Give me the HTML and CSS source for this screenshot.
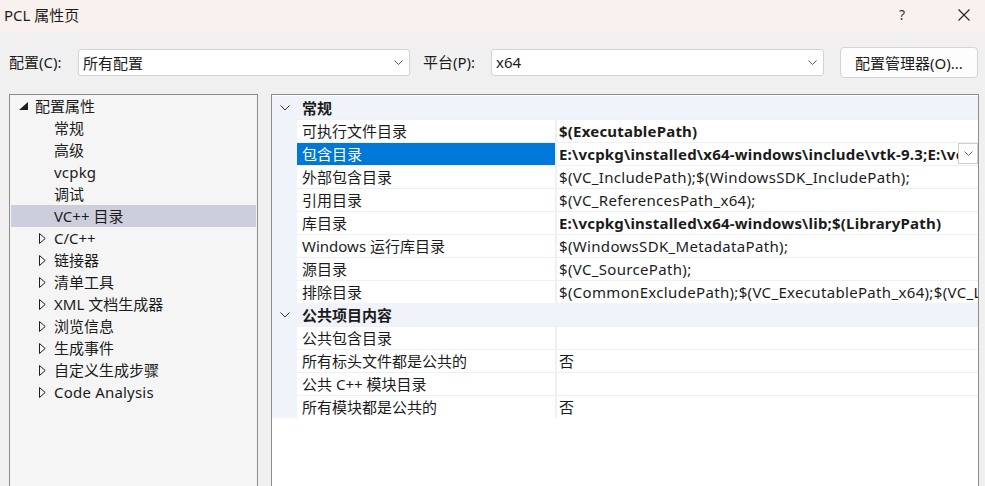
FILE: index.html
```html
<!DOCTYPE html>
<html lang="zh-CN">
<head>
    <meta charset="UTF-8">
    <title>PCL 属性页</title>
    <link rel="stylesheet" href="styles.css">
</head>
<body>
    <div class="window">
        <!-- Title bar -->
        <div class="titlebar">
            <span class="title">PCL 属性页</span>
            <div class="caption-buttons">
                <span class="help">?</span>
                <span class="close">
                    <svg width="12" height="12" viewBox="0 0 12 12"><path d="M0.5 0.5 L11.5 11.5 M11.5 0.5 L0.5 11.5" stroke="#222" stroke-width="1.1" fill="none"/></svg>
                </span>
            </div>
        </div>

        <!-- Configuration / platform bar -->
        <div class="toolbar">
            <label class="field-label config-label">配置(C):</label>
            <div class="combo config-combo">
                <span>所有配置</span>
                <svg class="chevron" width="9" height="5" viewBox="0 0 9 5"><path d="M0.5 0.5 L4.5 4.5 L8.5 0.5" stroke="#555" fill="none"/></svg>
            </div>
            <label class="field-label platform-label">平台(P):</label>
            <div class="combo platform-combo">
                <span>x64</span>
                <svg class="chevron" width="9" height="5" viewBox="0 0 9 5"><path d="M0.5 0.5 L4.5 4.5 L8.5 0.5" stroke="#555" fill="none"/></svg>
            </div>
            <button class="manager-btn">配置管理器(O)...</button>
        </div>

        <div class="content">
            <!-- Left tree -->
            <div class="tree">
                <div class="node level0">
                    <span class="twisty"><svg width="9" height="8" viewBox="0 0 9 8"><path d="M9 0 L9 8 L0 8 Z" fill="#1e1e1e"/></svg></span>
                    <span>配置属性</span>
                </div>
                <div class="node level1"><span class="twisty"></span><span>常规</span></div>
                <div class="node level1"><span class="twisty"></span><span>高级</span></div>
                <div class="node level1"><span class="twisty"></span><span class="latin">vcpkg</span></div>
                <div class="node level1"><span class="twisty"></span><span>调试</span></div>
                <div class="node level1 selected"><span class="twisty"></span><span>VC++ 目录</span></div>
                <div class="node level1"><span class="twisty"><svg class="closed" width="7" height="11" viewBox="0 0 7 11"><path d="M0.5 0.5 L6.2 5.5 L0.5 10.5 Z" fill="none" stroke="#1e1e1e"/></svg></span><span>C/C++</span></div>
                <div class="node level1"><span class="twisty"><svg class="closed" width="7" height="11" viewBox="0 0 7 11"><path d="M0.5 0.5 L6.2 5.5 L0.5 10.5 Z" fill="none" stroke="#1e1e1e"/></svg></span><span>链接器</span></div>
                <div class="node level1"><span class="twisty"><svg class="closed" width="7" height="11" viewBox="0 0 7 11"><path d="M0.5 0.5 L6.2 5.5 L0.5 10.5 Z" fill="none" stroke="#1e1e1e"/></svg></span><span>清单工具</span></div>
                <div class="node level1"><span class="twisty"><svg class="closed" width="7" height="11" viewBox="0 0 7 11"><path d="M0.5 0.5 L6.2 5.5 L0.5 10.5 Z" fill="none" stroke="#1e1e1e"/></svg></span><span>XML 文档生成器</span></div>
                <div class="node level1"><span class="twisty"><svg class="closed" width="7" height="11" viewBox="0 0 7 11"><path d="M0.5 0.5 L6.2 5.5 L0.5 10.5 Z" fill="none" stroke="#1e1e1e"/></svg></span><span>浏览信息</span></div>
                <div class="node level1"><span class="twisty"><svg class="closed" width="7" height="11" viewBox="0 0 7 11"><path d="M0.5 0.5 L6.2 5.5 L0.5 10.5 Z" fill="none" stroke="#1e1e1e"/></svg></span><span>生成事件</span></div>
                <div class="node level1"><span class="twisty"><svg class="closed" width="7" height="11" viewBox="0 0 7 11"><path d="M0.5 0.5 L6.2 5.5 L0.5 10.5 Z" fill="none" stroke="#1e1e1e"/></svg></span><span>自定义生成步骤</span></div>
                <div class="node level1"><span class="twisty"><svg class="closed" width="7" height="11" viewBox="0 0 7 11"><path d="M0.5 0.5 L6.2 5.5 L0.5 10.5 Z" fill="none" stroke="#1e1e1e"/></svg></span><span class="latin">Code Analysis</span></div>
            </div>

            <!-- Property grid -->
            <div class="grid">
                <div class="row category">
                    <span class="gutter"><svg width="10" height="6" viewBox="0 0 10 6"><path d="M0.5 0.5 L5 5 L9.5 0.5" stroke="#333" fill="none"/></svg></span>
                    <span class="cat-name">常规</span>
                </div>
                <div class="row">
                    <span class="gutter"></span>
                    <span class="name">可执行文件目录</span>
                    <span class="value bold">$(ExecutablePath)</span>
                </div>
                <div class="row active">
                    <span class="gutter"></span>
                    <span class="name">包含目录</span>
                    <span class="value bold">
                        <span class="value-text">E:\vcpkg\installed\x64-windows\include\vtk-9.3;E:\vcpkg\installed\x64-windows\include;$(IncludePath)</span>
                        <span class="drop-btn"><svg width="9" height="5" viewBox="0 0 9 5"><path d="M0.5 0.5 L4.5 4.5 L8.5 0.5" stroke="#666" fill="none"/></svg></span>
                    </span>
                </div>
                <div class="row">
                    <span class="gutter"></span>
                    <span class="name">外部包含目录</span>
                    <span class="value">$(VC_IncludePath);$(WindowsSDK_IncludePath);</span>
                </div>
                <div class="row">
                    <span class="gutter"></span>
                    <span class="name">引用目录</span>
                    <span class="value">$(VC_ReferencesPath_x64);</span>
                </div>
                <div class="row">
                    <span class="gutter"></span>
                    <span class="name">库目录</span>
                    <span class="value bold">E:\vcpkg\installed\x64-windows\lib;$(LibraryPath)</span>
                </div>
                <div class="row">
                    <span class="gutter"></span>
                    <span class="name">Windows 运行库目录</span>
                    <span class="value">$(WindowsSDK_MetadataPath);</span>
                </div>
                <div class="row">
                    <span class="gutter"></span>
                    <span class="name">源目录</span>
                    <span class="value">$(VC_SourcePath);</span>
                </div>
                <div class="row">
                    <span class="gutter"></span>
                    <span class="name">排除目录</span>
                    <span class="value">$(CommonExcludePath);$(VC_ExecutablePath_x64);$(VC_LibraryPath_x64)</span>
                </div>
                <div class="row category">
                    <span class="gutter"><svg width="10" height="6" viewBox="0 0 10 6"><path d="M0.5 0.5 L5 5 L9.5 0.5" stroke="#333" fill="none"/></svg></span>
                    <span class="cat-name">公共项目内容</span>
                </div>
                <div class="row">
                    <span class="gutter"></span>
                    <span class="name">公共包含目录</span>
                    <span class="value"></span>
                </div>
                <div class="row">
                    <span class="gutter"></span>
                    <span class="name">所有标头文件都是公共的</span>
                    <span class="value">否</span>
                </div>
                <div class="row">
                    <span class="gutter"></span>
                    <span class="name">公共 C++ 模块目录</span>
                    <span class="value"></span>
                </div>
                <div class="row">
                    <span class="gutter"></span>
                    <span class="name">所有模块都是公共的</span>
                    <span class="value">否</span>
                </div>
            </div>
        </div>
    </div>
</body>
</html>
```

FILE: styles.css
```css
/* Dialog window */
body {
    margin: 0;
    font-family: "Noto Sans", "Noto Sans CJK SC", sans-serif;
    font-size: 15px;
    color: #1b1b1b;
    background-color: #f0f0f0;
    overflow: hidden;
}

.window {
    width: 985px;
    height: 486px;
    overflow: hidden;
    display: flex;
    flex-direction: column;
}

/* Title bar */
.titlebar {
    height: 33px;
    flex-shrink: 0;
    background-color: #f9f1ee;
    display: flex;
    align-items: center;
    justify-content: space-between;
    padding-left: 4px;
}

.title {
    line-height: 20px;
    margin-top: -4px;
}

.caption-buttons {
    display: flex;
    align-items: center;
    margin-top: -4px;
}

.help {
    width: 12px;
    margin-right: 47px;
    color: #333;
    font-size: 14px;
}

.close {
    display: flex;
    margin-right: 15px;
}

/* Configuration bar */
.toolbar {
    height: 61px;
    flex-shrink: 0;
    display: flex;
    align-items: center;
    padding-left: 9px;
    padding-bottom: 3px;
    box-sizing: border-box;
}

.field-label {
    line-height: 20px;
}

.config-label {
    width: 69px;
}

.platform-label {
    width: 68px;
    padding-left: 13px;
}

.combo {
    height: 27px;
    box-sizing: border-box;
    background-color: #fff;
    border: 1px solid #d3d3d3;
    border-radius: 3px;
    display: flex;
    align-items: center;
    justify-content: space-between;
    padding: 0 6px 0 4px;
}

.config-combo {
    width: 332px;
}

.platform-combo {
    width: 333px;
}

.manager-btn {
    margin-left: 16px;
    width: 138px;
    height: 31px;
    font-family: inherit;
    font-size: 15px;
    color: #1b1b1b;
    background-color: #fdfdfd;
    border: 1px solid #d4d4d4;
    border-radius: 4px;
    padding: 0;
}

/* Panels */
.content {
    flex: 1;
    display: flex;
    gap: 13px;
    padding-left: 9px;
}

.tree {
    width: 249px;
    height: 420px;
    box-sizing: border-box;
    border: 1px solid #8c8c8c;
    background-color: #f5f5f5;
    padding: 0 1px;
    flex-shrink: 0;
}

.node {
    height: 22px;
    display: flex;
    align-items: center;
    white-space: nowrap;
}

.node span {
    line-height: 20px;
}

.node .latin {
    letter-spacing: 0.2px;
}

.node.level0 {
    padding-left: 8px;
}

.node.level0 .twisty {
    width: 16px;
    display: flex;
    align-items: center;
}

.node.level1 {
    padding-left: 28px;
}

.node.level1 .twisty {
    width: 15px;
    display: flex;
    align-items: center;
}

.node.selected {
    background-color: #cccedb;
}

/* Property grid */
.grid {
    width: 708px;
    height: 420px;
    box-sizing: border-box;
    border: 1px solid #8c8c8c;
    background-color: #fff;
    padding-top: 1px;
    flex-shrink: 0;
}

.row {
    height: 23px;
    display: flex;
    white-space: nowrap;
}

.gutter {
    width: 25px;
    flex-shrink: 0;
    background-color: #f0f3f9;
    display: flex;
    align-items: center;
    justify-content: center;
}

.row.category {
    background-color: #f0f3f9;
    align-items: center;
}

.cat-name {
    font-weight: bold;
    padding-left: 5px;
    line-height: 20px;
}

.name {
    width: 253px;
    flex-shrink: 0;
    padding-left: 5px;
    border-top: 1px solid #eef0f5;
    border-right: 2px solid #eef0f5;
    line-height: 22px;
    overflow: hidden;
}

.value {
    flex: 1;
    min-width: 0;
    padding-left: 2px;
    border-top: 1px solid #eef0f5;
    line-height: 22px;
    overflow: hidden;
    display: flex;
    letter-spacing: 0.33px;
}

.bold {
    font-weight: bold;
    letter-spacing: 0.2px;
}

.row.active .name {
    background-color: #0078d7;
    color: #fff;
}

.value-text {
    flex: 1;
    min-width: 0;
    overflow: hidden;
}

.drop-btn {
    width: 20px;
    height: 21px;
    box-sizing: border-box;
    flex-shrink: 0;
    border: 1px solid #cfcfcf;
    background-color: #fff;
    display: flex;
    align-items: center;
    justify-content: center;
}
```
